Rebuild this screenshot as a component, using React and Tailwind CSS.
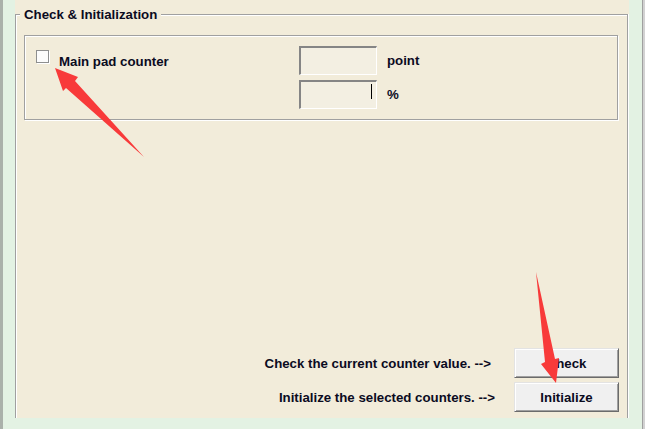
import React from 'react';

const FieldBox = ({ caret }) => (
  <div className="w-[78px] h-[29px] bg-[#f3efe2] border-t-2 border-l-2 border-r border-b border-t-[#858585] border-l-[#858585] border-r-white border-b-white flex justify-end pr-[4px]">
    {caret && <div className="mt-[2px] w-px h-[15px] bg-black" />}
  </div>
);

const WinButton = ({ children }) => (
  <button className="w-[105px] h-[30px] bg-[#f0f0f0] border border-t-[#e3e3e3] border-l-[#e3e3e3] border-r-[#6b6b6b] border-b-[#6b6b6b] shadow-[inset_1px_1px_0_#fff,inset_-1px_-1px_0_#a0a0a0] text-[13.25px] font-bold text-[#0b0b1f] leading-[15px]">
    {children}
  </button>
);

const App = () => {
  return (
    <div className="relative w-[645px] h-[429px] overflow-hidden bg-[#e3f2e3] flex font-['Liberation_Sans',Arial,sans-serif] text-[13.25px] font-bold text-[#0b0b1f]">
      <div className="w-[3px] h-full bg-[#aab1aa]" />

      {/* Panel */}
      <div className="ml-[12px] w-[614px] h-[418px] overflow-hidden bg-[#f2ecda]">
        <fieldset className="mt-[7px] w-[613px] h-[420px] border border-b-0 border-[#a0a0a0] px-[8px] shadow-[inset_1px_1px_0_#fff,1px_0_0_#fff]">
          <legend className="-ml-[4px] px-[4px] leading-[15px] bg-[#f2ecda]">Check &amp; Initialization</legend>

          {/* Counter group */}
          <div className="mt-[13px] w-[594px] h-[85px] border border-[#a0a0a0] shadow-[inset_1px_1px_0_#fff,1px_1px_0_#fff] flex pl-[11px] pt-[10px]">
            <div className="w-[263px] flex items-start gap-[10px]">
              <div className="mt-[4px] w-[13px] h-[13px] border border-[#8e8f8f] bg-[#fcfcfc] shadow-[1px_1px_0_#fff]" />
              <span className="mt-[8px] leading-[15px]">Main pad counter</span>
            </div>
            <div className="flex flex-col gap-[5px]">
              <div className="flex items-center gap-[10px]">
                <FieldBox />
                <span className="leading-[15px]">point</span>
              </div>
              <div className="flex items-center gap-[10px]">
                <FieldBox caret />
                <span className="leading-[15px]">%</span>
              </div>
            </div>
          </div>

          {/* Actions */}
          <div className="mt-[228px] flex flex-col items-end gap-[4px]">
            <div className="flex items-center">
              <span className="mr-[23px] leading-[15px]">Check the current counter value. --&gt;</span>
              <WinButton>Check</WinButton>
            </div>
            <div className="flex items-center">
              <span className="mr-[19px] leading-[15px]">Initialize the selected counters. --&gt;</span>
              <WinButton>Initialize</WinButton>
            </div>
          </div>
        </fieldset>
      </div>

      <div className="ml-[13px] w-[3px] h-full border-l border-[#a0a0a0] bg-[#d2d2d2]" />

      {/* Annotation arrows */}
      <svg className="absolute inset-0 pointer-events-none" width="645" height="429" viewBox="0 0 645 429">
        <polygon points="144,157 75,81 78,77 55,68 63,91 66,88" fill="#f83a3a" />
        <polygon points="536,272 555,359 559,358 556,383 541,364 545,362" fill="#f83a3a" />
      </svg>
    </div>
  );
};

export default App;
